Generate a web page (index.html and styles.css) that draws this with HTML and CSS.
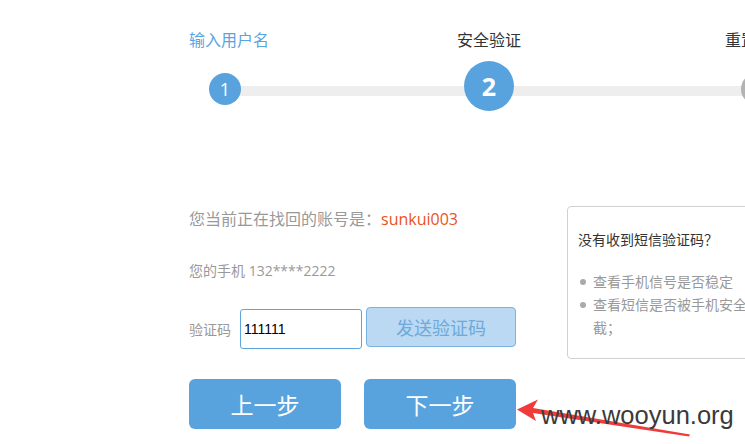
FILE: index.html
```html
<!DOCTYPE html>
<html lang="zh-CN">
<head>
<meta charset="utf-8">
<title>找回密码 - 安全验证</title>
<link rel="stylesheet" href="styles.css">
</head>
<body>
<div class="page">
  <div class="steps">
    <div class="track"></div>
    <div class="step done">
      <div class="step-label">输入用户名</div>
      <div class="dot-row"><span class="dot small">1</span></div>
    </div>
    <div class="step current">
      <div class="step-label">安全验证</div>
      <div class="dot-row"><span class="dot big">2</span></div>
    </div>
    <div class="step todo">
      <div class="step-label">重置密码</div>
      <div class="dot-row"><span class="dot small">3</span></div>
    </div>
  </div>

  <div class="content">
    <div class="form">
      <div class="account">您当前正在找回的账号是<span class="fw">：</span><span class="account-name">sunkui003</span></div>
      <div class="phone">您的手机 132****2222</div>
      <div class="code-row">
        <label class="code-label" for="code">验证码</label>
        <input class="code-input" id="code" type="text" value="111111">
        <button class="send-btn" type="button">发送验证码</button>
      </div>
      <div class="actions">
        <button class="step-btn" type="button">上一步</button>
        <button class="step-btn" type="button">下一步</button>
      </div>
    </div>
    <div class="help">
      <div class="help-title">没有收到短信验证码<span class="fw">？</span></div>
      <ul class="help-list">
        <li>查看手机信号是否稳定</li>
        <li>查看短信是否被手机安全软件拦截<span class="fw">；</span></li>
      </ul>
    </div>
  </div>

  <svg class="arrow" width="745" height="444" viewBox="0 0 745 444" aria-hidden="true">
    <polygon points="517,409.5 538,399.5 533,408 690,434.5 689,436.5 533,413 536,421" fill="#f03b3b"/>
  </svg>
  <div class="watermark">www.wooyun.org</div>
</div>
</body>
</html>
```

FILE: styles.css
```css
html, body {
  margin: 0;
  padding: 0;
  background: #fff;
  overflow: hidden;
}

.page {
  position: relative;
  width: 745px;
  height: 444px;
  font-family: "Open Sans", "Noto Sans CJK SC", sans-serif;
  color: #333;
}

.fw {
  font-family: "Noto Sans CJK TC", "Noto Sans CJK SC", sans-serif;
}

.steps {
  position: relative;
  display: grid;
  grid-template-columns: 264px 264px 272px;
  margin-left: 93px;
  padding-top: 29px;
}

.track {
  position: absolute;
  left: 132px;
  width: 532px;
  top: 86px;
  height: 10px;
  background: #eeeeee;
}

.step {
  display: flex;
  flex-direction: column;
  align-items: center;
}

.step-label {
  font-family: "Noto Sans CJK SC", sans-serif;
  font-size: 16px;
  line-height: 20px;
  color: #333;
}

.step.done .step-label {
  color: #5aa4de;
  margin-left: 8px;
}

.dot-row {
  position: relative;
  height: 50px;
  margin-top: 12px;
  display: flex;
  align-items: flex-start;
}

.dot {
  display: flex;
  align-items: center;
  justify-content: center;
  border-radius: 50%;
  color: #fff;
  background: #58a3de;
}

.dot.small {
  width: 32px;
  height: 32px;
  margin-top: 12px;
  font-size: 18px;
}

.dot.big {
  width: 50px;
  height: 50px;
  font-size: 25px;
  font-weight: 700;
}

.step.todo .dot {
  background: #b3b3b3;
}

.content {
  display: flex;
  align-items: flex-start;
  gap: 51px;
  margin-top: 95px;
  padding-left: 189px;
}

.form {
  width: 327px;
  flex: none;
}

.account {
  font-family: "Noto Sans CJK SC", sans-serif;
  font-size: 16px;
  line-height: 24px;
  color: #999;
}

.account-name {
  font-family: "Open Sans", sans-serif;
  color: #ea5321;
}

.phone {
  margin-top: 30px;
  font-size: 14px;
  line-height: 20px;
  color: #999;
}

.code-row {
  display: flex;
  align-items: flex-start;
  margin-top: 26px;
}

.code-label {
  font-family: "Noto Sans CJK SC", sans-serif;
  font-size: 14px;
  line-height: 20px;
  color: #999;
  margin-top: 12px;
  margin-right: 9px;
}

.code-input {
  box-sizing: border-box;
  width: 122px;
  height: 40px;
  margin: 2px 0 0 0;
  padding: 0 0 0 3px;
  border: 1px solid #5ea5dd;
  border-radius: 3px;
  font-family: "Liberation Sans", sans-serif;
  font-size: 14px;
  color: #000;
  outline: none;
}

.send-btn {
  box-sizing: border-box;
  width: 150px;
  height: 40px;
  margin-left: 4px;
  padding: 0;
  border: 1px solid #79b3e2;
  border-radius: 4px;
  background: #bbd9f2;
  color: #6ea9dc;
  font-family: "Noto Sans CJK SC", sans-serif;
  font-size: 18px;
}

.actions {
  display: flex;
  gap: 23px;
  margin-top: 30px;
}

.step-btn {
  width: 152px;
  height: 50px;
  padding: 0;
  border: none;
  border-radius: 6px;
  background: #58a3de;
  color: #fff;
  font-family: "Noto Sans CJK SC", sans-serif;
  font-size: 23px;
}

.help {
  box-sizing: border-box;
  flex: none;
  width: 240px;
  height: 153px;
  border: 1px solid #d0d0d0;
  border-radius: 4px;
  padding: 22px 10px 0 10px;
}

.help-title {
  font-family: "Noto Sans CJK SC", sans-serif;
  font-size: 14px;
  line-height: 20px;
  color: #333;
}

.help-list {
  list-style: none;
  margin: 21px 0 0 0;
  padding: 0;
}

.help-list li {
  position: relative;
  padding-left: 15px;
  font-family: "Noto Sans CJK SC", sans-serif;
  font-size: 14px;
  line-height: 23px;
  color: #999;
}

.help-list li::before {
  content: "";
  position: absolute;
  left: 2px;
  top: 9px;
  width: 6px;
  height: 6px;
  border-radius: 50%;
  background: #aaa;
}

.arrow {
  position: absolute;
  left: 0;
  top: 0;
  pointer-events: none;
}

.watermark {
  position: absolute;
  left: 541px;
  top: 402px;
  font-family: "Liberation Sans", sans-serif;
  font-size: 25.5px;
  line-height: 26px;
  color: #3a3a3a;
  white-space: nowrap;
}
```
